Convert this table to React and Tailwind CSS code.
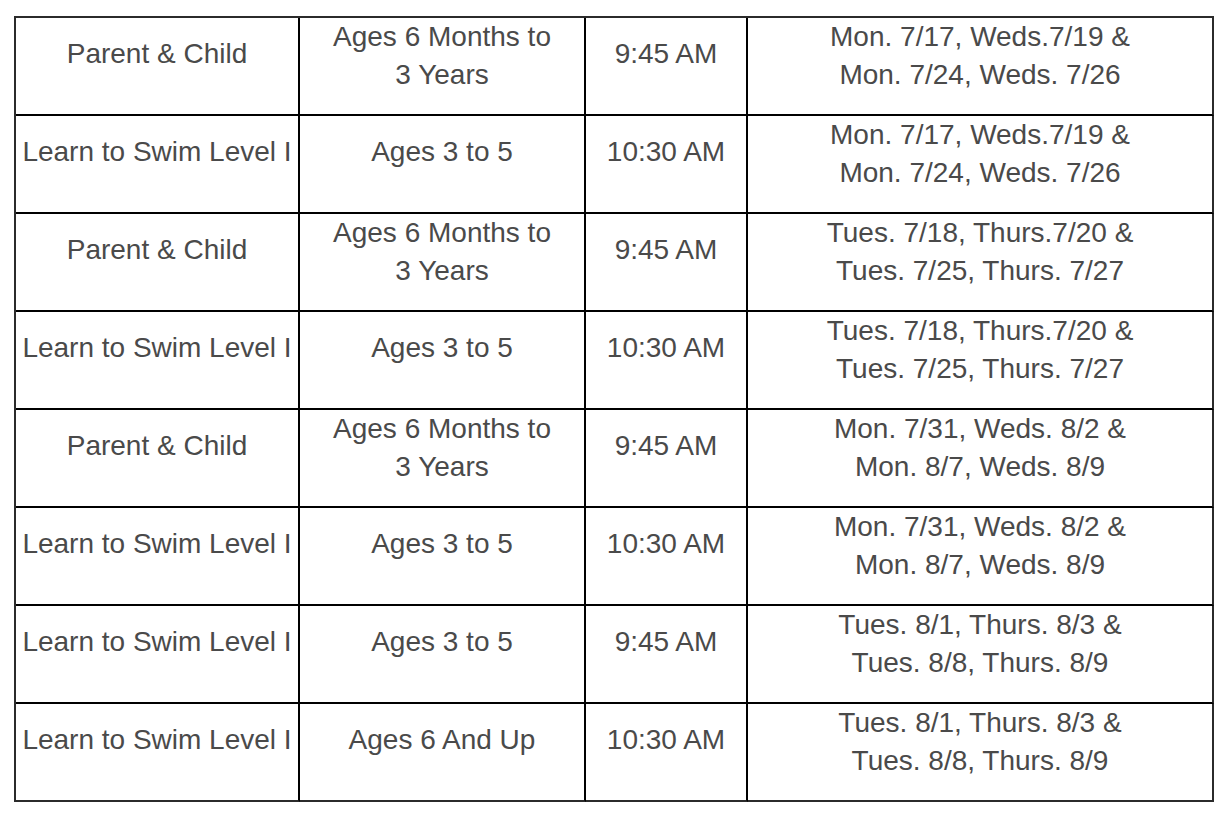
import React from "react"

const rows = [
  ["Parent & Child", ["Ages 6 Months to", "3 Years"], "9:45 AM", ["Mon. 7/17, Weds.7/19 &", "Mon. 7/24, Weds. 7/26"]],
  ["Learn to Swim Level I", ["Ages 3 to 5"], "10:30 AM", ["Mon. 7/17, Weds.7/19 &", "Mon. 7/24, Weds. 7/26"]],
  ["Parent & Child", ["Ages 6 Months to", "3 Years"], "9:45 AM", ["Tues. 7/18, Thurs.7/20 &", "Tues. 7/25, Thurs. 7/27"]],
  ["Learn to Swim Level I", ["Ages 3 to 5"], "10:30 AM", ["Tues. 7/18, Thurs.7/20 &", "Tues. 7/25, Thurs. 7/27"]],
  ["Parent & Child", ["Ages 6 Months to", "3 Years"], "9:45 AM", ["Mon. 7/31, Weds. 8/2 &", "Mon. 8/7, Weds. 8/9"]],
  ["Learn to Swim Level I", ["Ages 3 to 5"], "10:30 AM", ["Mon. 7/31, Weds. 8/2 &", "Mon. 8/7, Weds. 8/9"]],
  ["Learn to Swim Level I", ["Ages 3 to 5"], "9:45 AM", ["Tues. 8/1, Thurs. 8/3 &", "Tues. 8/8, Thurs. 8/9"]],
  ["Learn to Swim Level I", ["Ages 6 And Up"], "10:30 AM", ["Tues. 8/1, Thurs. 8/3 &", "Tues. 8/8, Thurs. 8/9"]],
]

function Cell({ lines, last, bottom }) {
  const list = Array.isArray(lines) ? lines : [lines]
  return (
    <div
      className={`flex h-[98px] items-center justify-center border-b-2 border-r-2 text-center ${
        list.length > 1 ? "pb-[20px]" : "pb-[24px]"
      } ${last ? "border-r-[#2b2b2b]" : "border-r-black"} ${bottom ? "border-b-[#2b2b2b]" : "border-b-black"}`}
    >
      <div>
        {list.map((l, i) => (
          <div key={i} className="whitespace-nowrap">
            {l}
          </div>
        ))}
      </div>
    </div>
  )
}

export default function App() {
  return (
    <div className="min-h-screen bg-white pl-[14px] pt-[16px] font-['Liberation_Sans',Arial,sans-serif] text-[28px] leading-[38px] text-[#4a4a4a]">
      <div className="grid w-[1200px] grid-cols-[284px_286px_162px_466px] border-l-2 border-t-2 border-[#2b2b2b]">
        {rows.map((r, ri) =>
          r.map((c, ci) => (
            <Cell key={`${ri}-${ci}`} lines={c} last={ci === 3} bottom={ri === rows.length - 1} />
          ))
        )}
      </div>
    </div>
  )
}
